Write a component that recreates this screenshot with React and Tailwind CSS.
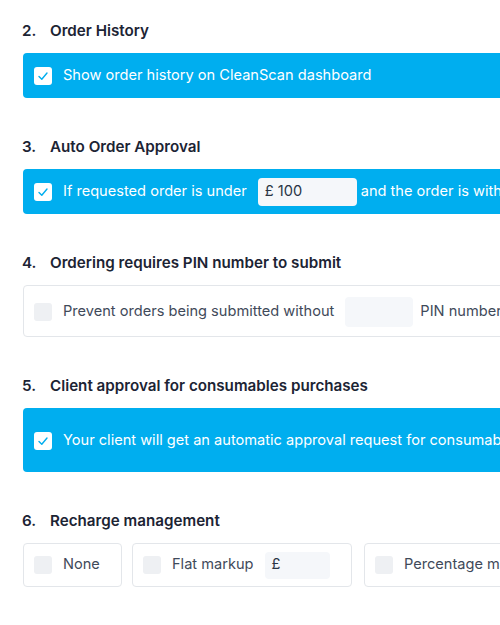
import { useState } from 'react'

function Check({ checked }) {
  if (checked) {
    return (
      <span className="flex h-[18px] w-[18px] shrink-0 items-center justify-center rounded-[3px] bg-white">
        <svg width="12" height="12" viewBox="0 0 12 12" fill="none">
          <polyline points="2,6.5 4.8,9.2 10,3" stroke="#00aeef" strokeWidth="1.4" strokeLinecap="round" strokeLinejoin="round" />
        </svg>
      </span>
    )
  }
  return <span className="h-[18px] w-[18px] shrink-0 rounded-[3px] bg-[#eef0f3]" />
}

function Heading({ num, children }) {
  return (
    <h2 className="mb-3 flex h-5 items-center pl-[22px] text-[15.2px] font-semibold text-[#1c2434]">
      <span className="w-[28px]">{num}</span>
      <span>{children}</span>
    </h2>
  )
}

export default function App() {
  const [amount] = useState('100')

  return (
    <div className="h-[625px] w-[500px] overflow-hidden bg-white pt-[21px] font-['Inter',sans-serif] text-[14.6px]">
      <div className="w-[760px]">
        <section className="mb-[39px]">
          <Heading num="2.">Order History</Heading>
          <div className="ml-[23px] flex h-[45px] items-center gap-[11px] rounded-[4px] bg-[#00aeef] px-[11px] pt-px text-white">
            <Check checked />
            <span>Show order history on CleanScan dashboard</span>
          </div>
        </section>

        <section className="mb-[39px]">
          <Heading num="3.">Auto Order Approval</Heading>
          <div className="ml-[23px] flex h-[45px] items-center gap-[11px] rounded-[4px] bg-[#00aeef] px-[11px] pt-px text-white">
            <Check checked />
            <span>If requested order is under</span>
            <div className="flex h-[28px] w-[99px] items-center rounded-[4px] bg-[#f5f7fa] px-[7px] text-[#2a3444]">
              £ {amount}
            </div>
            <span className="-ml-[7px]">and the order is within budget</span>
          </div>
        </section>

        <section className="mb-[39px]">
          <Heading num="4.">Ordering requires PIN number to submit</Heading>
          <div className="ml-[23px] flex h-[52px] items-center gap-[11px] rounded-[4px] border border-[#e3e6ea] px-[10px] pt-px text-[#3f4a5a]">
            <Check />
            <span>Prevent orders being submitted without</span>
            <div className="h-[30px] w-[68px] rounded-[4px] bg-[#f5f7fa]" />
            <span className="-ml-[4px]">PIN number</span>
          </div>
        </section>

        <section className="mb-[39px]">
          <Heading num="5.">Client approval for consumables purchases</Heading>
          <div className="ml-[23px] flex h-[64px] items-center gap-[11px] rounded-[4px] bg-[#00aeef] px-[11px] pt-px text-white">
            <Check checked />
            <span>Your client will get an automatic approval request for consumables purchases</span>
          </div>
        </section>

        <section>
          <Heading num="6.">Recharge management</Heading>
          <div className="ml-[23px] flex text-[#3f4a5a]">
            <div className="flex h-[44px] w-[99px] items-center gap-[11px] rounded-[4px] border border-[#e3e6ea] px-[10px]">
              <Check />
              <span>None</span>
            </div>
            <div className="ml-[10px] flex h-[44px] w-[220px] items-center gap-[11px] rounded-[4px] border border-[#e3e6ea] px-[10px]">
              <Check />
              <span>Flat markup</span>
              <div className="flex h-[27px] w-[65px] items-center rounded-[4px] bg-[#f5f7fa] px-[7px] text-[#2a3444]">£</div>
            </div>
            <div className="ml-[12px] flex h-[44px] w-[240px] items-center gap-[11px] rounded-[4px] border border-[#e3e6ea] px-[10px]">
              <Check />
              <span>Percentage markup</span>
            </div>
          </div>
        </section>
      </div>
    </div>
  )
}
